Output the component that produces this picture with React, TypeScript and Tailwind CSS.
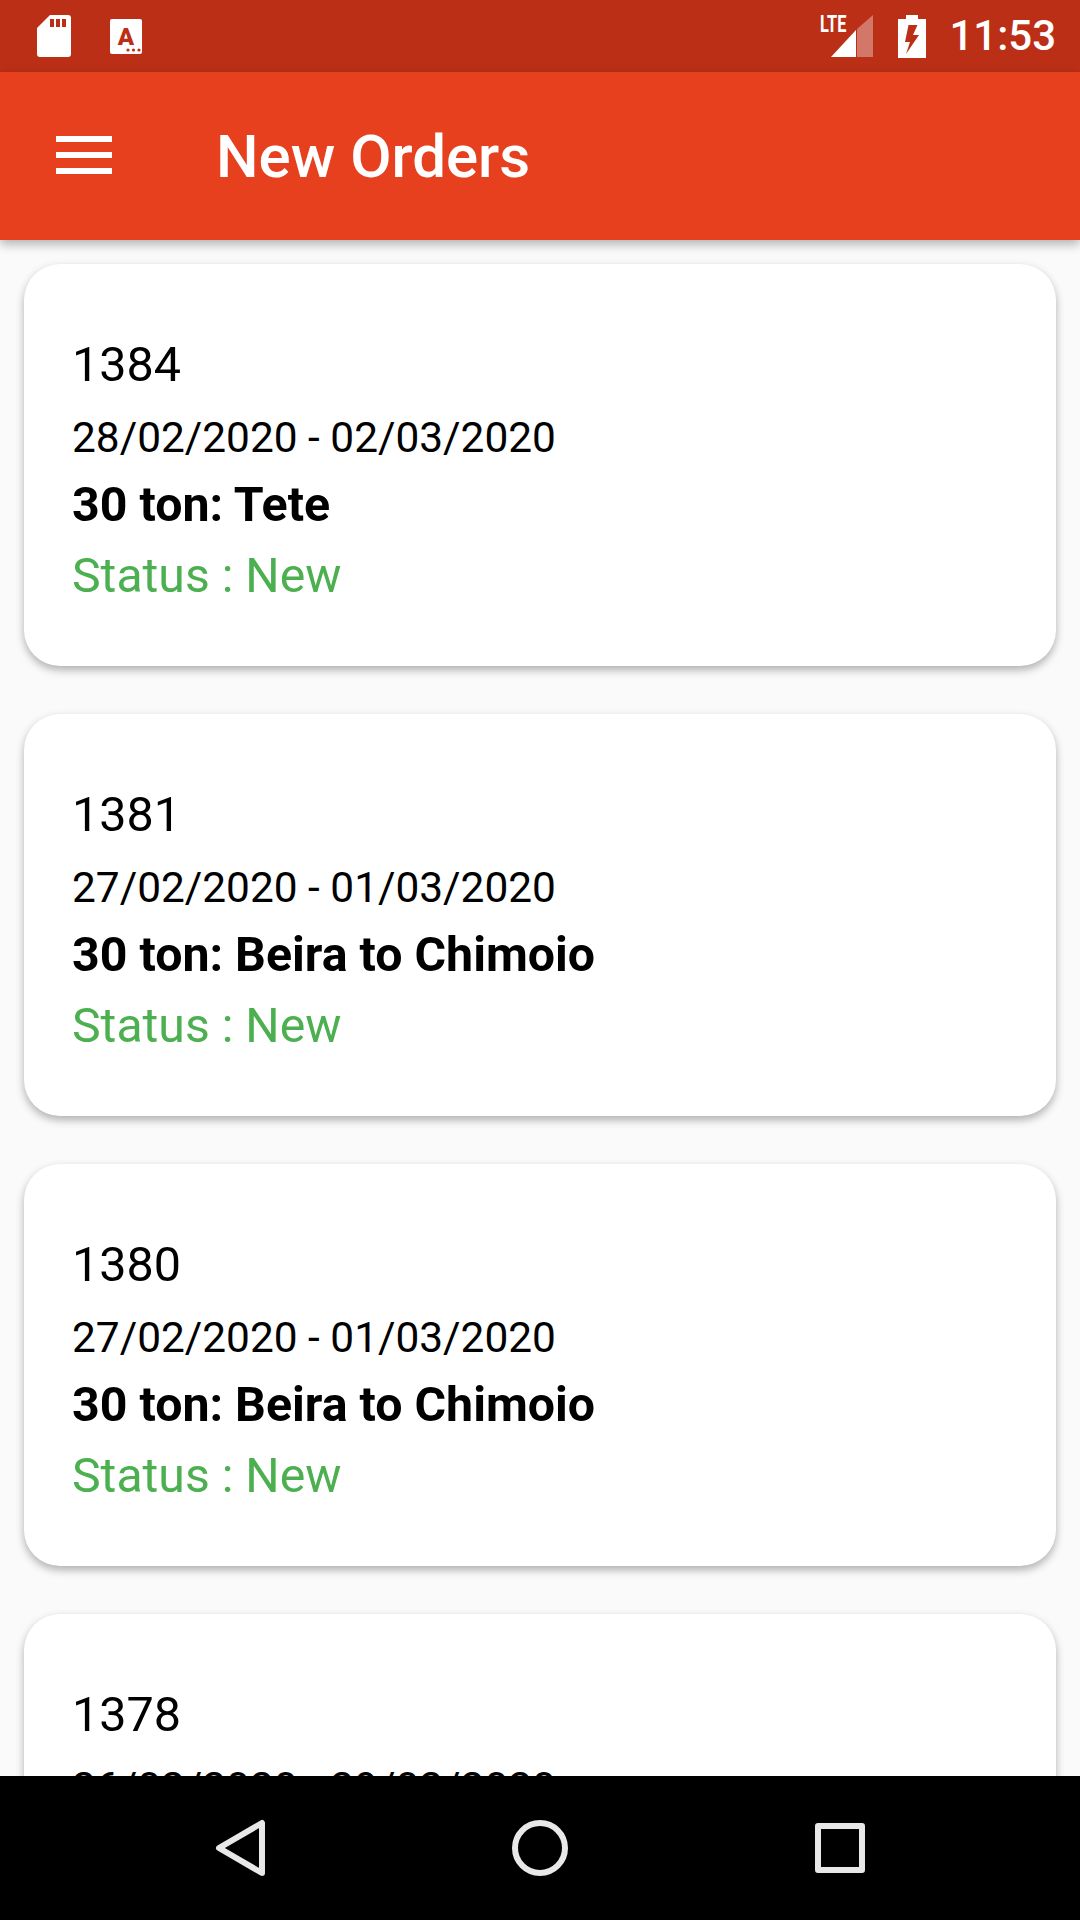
import React from 'react';

interface Order {
  id: string;
  dates: string;
  load: string;
}

const orders: Order[] = [
  { id: '1384', dates: '28/02/2020 - 02/03/2020', load: '30 ton: Tete' },
  { id: '1381', dates: '27/02/2020 - 01/03/2020', load: '30 ton: Beira to Chimoio' },
  { id: '1380', dates: '27/02/2020 - 01/03/2020', load: '30 ton: Beira to Chimoio' },
  { id: '1378', dates: '26/02/2020 - 29/02/2020', load: '30 ton: Beira to Chimoio' },
];

const StatusBar: React.FC = () => (
  <div className="h-[72px] shrink-0 bg-[#bc2f17] flex items-center text-white">
    <svg className="ml-[37px] w-[34px] h-[42px]" viewBox="0 0 34 42">
      <path d="M13 0H31a3 3 0 013 3V39a3 3 0 01-3 3H3a3 3 0 01-3-3V13z" fill="#fff" />
      <rect x="13" y="4" width="4" height="8" fill="#bc2f17" />
      <rect x="19" y="4" width="4" height="8" fill="#bc2f17" />
      <rect x="25" y="4" width="4" height="8" fill="#bc2f17" />
    </svg>
    <svg className="ml-[39px] w-[32px] h-[35px]" viewBox="0 0 32 35">
      <rect width="32" height="35" rx="2" fill="#fff" />
      <text x="16" y="26" textAnchor="middle" fontSize="24" fontWeight="900" fill="#bc2f17" fontFamily="Roboto, sans-serif">A</text>
      <circle cx="18" cy="31" r="1.6" fill="#bc2f17" />
      <circle cx="23.5" cy="31" r="1.6" fill="#bc2f17" />
      <circle cx="29" cy="31" r="1.6" fill="#bc2f17" />
    </svg>
    <div className="relative ml-auto w-[53px] h-[42px]">
      <svg className="absolute right-0 top-0 w-[42px] h-[42px]" viewBox="0 0 42 42">
        <path d="M42 0V42H26V14z" fill="#fff" fillOpacity="0.35" />
        <path d="M25 15V42H0z" fill="#fff" />
      </svg>
      <span className="absolute left-0 top-[-1px] text-[24px] leading-[20px] font-bold font-['Roboto',sans-serif] scale-x-[0.68] origin-left">LTE</span>
    </div>
    <svg className="ml-[25px] w-[28px] h-[43px]" viewBox="0 0 28 43">
      <path d="M8 0H20V4H28V43H0V4H8z" fill="#fff" />
      <path d="M10.5 10H19.5L15 20H21L8 39L12 27H7z" fill="#bc2f17" />
    </svg>
    <span className="ml-[23px] mr-[24px] text-[42px] font-medium leading-none font-['Roboto',sans-serif]">11:53</span>
  </div>
);

const Toolbar: React.FC = () => (
  <div className="relative z-10 h-[168px] shrink-0 bg-[#e7401f] flex items-center shadow-[0_4px_10px_rgba(0,0,0,0.3)]">
    <div className="ml-[56px] mb-[2px] w-[56px] flex flex-col gap-[10px]">
      <div className="h-[6px] bg-white" />
      <div className="h-[6px] bg-white" />
      <div className="h-[6px] bg-white" />
    </div>
    <span className="ml-[104px] mt-[2px] text-white text-[60px] leading-none font-medium font-['Roboto',sans-serif]">New Orders</span>
  </div>
);

const OrderCard: React.FC<{ order: Order }> = ({ order }) => (
  <div className="h-[402px] shrink-0 rounded-[36px] bg-white pl-[48px] pt-[66px] shadow-[0_4px_9px_rgba(0,0,0,0.3)] font-['Roboto',sans-serif]">
    <div className="text-[48.5px] leading-[70px] text-black">{order.id}</div>
    <div className="text-[42.4px] leading-[76px] text-black">{order.dates}</div>
    <div className="text-[48.3px] leading-[57px] font-bold text-black">{order.load}</div>
    <div className="text-[48.2px] leading-[86px] text-[#4caf50]">Status : New</div>
  </div>
);

const NavBar: React.FC = () => (
  <div className="relative z-10 h-[144px] shrink-0 bg-black flex items-center">
    <svg className="ml-[213px] w-[54px] h-[60px]" viewBox="0 0 54 60">
      <path d="M49 5V55L6 30z" fill="none" stroke="#e8e8e8" strokeWidth="6" strokeLinejoin="round" />
    </svg>
    <div className="ml-[245px] w-[56px] h-[56px] rounded-full border-[6px] border-[#e8e8e8]" />
    <div className="ml-[247px] w-[50px] h-[50px] rounded-[3px] border-[6px] border-[#e8e8e8]" />
  </div>
);

const App: React.FC = () => (
  <div className="w-[1080px] h-[1920px] flex flex-col overflow-hidden bg-[#fafafa]">
    <StatusBar />
    <Toolbar />
    <div className="flex-1 min-h-0 overflow-hidden flex flex-col gap-[48px] px-[24px] pt-[24px]">
      {orders.map((o) => (
        <OrderCard key={o.id} order={o} />
      ))}
    </div>
    <NavBar />
  </div>
);

export default App;
